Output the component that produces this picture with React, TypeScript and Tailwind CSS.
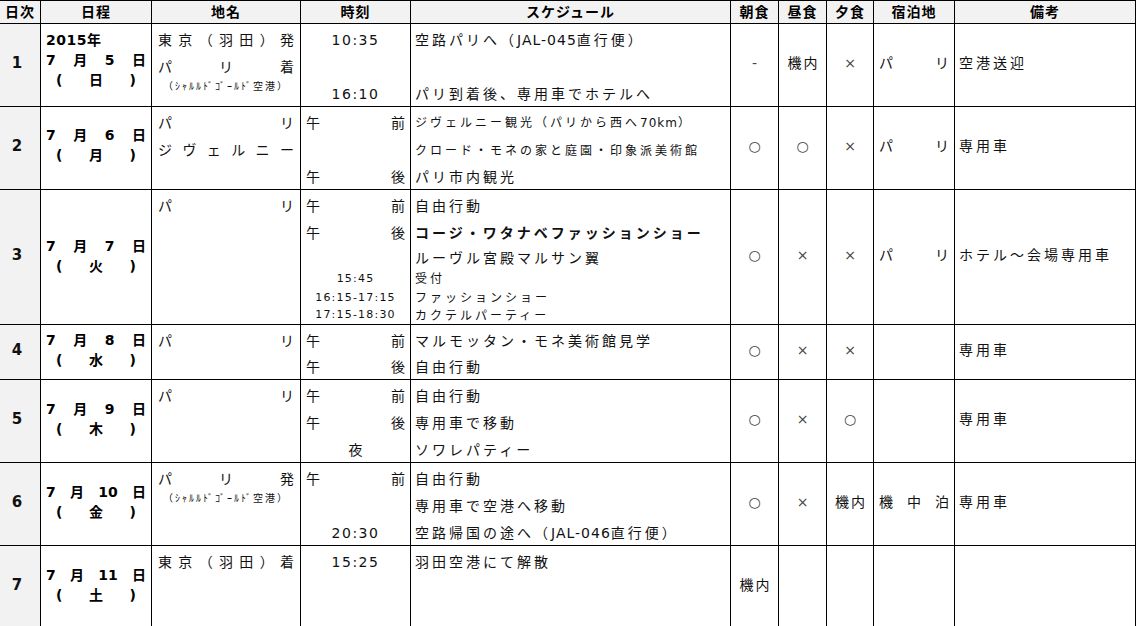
import React from "react";

// column template shared by header and every day row
const COLS =
  "grid grid-cols-[41px_111px_149px_110px_320px_48px_48px_47px_81px_181px]";
const FONT = "font-['DejaVu_Sans','Noto_Sans_CJK_JP',sans-serif]";

const T14 = "text-[14px] tracking-[3px]";
const T12 = "text-[12px] tracking-[3px]";
const TIME = "text-[14px] tracking-[1.5px]";
const TIME_S = "text-[11px] tracking-[1.2px]";

function Dist({ parts, className = "" }: { parts: string[]; className?: string }) {
  return (
    <div className={`flex w-full justify-between ${className}`}>
      {parts.map((p, i) => (
        <span key={i}>{p}</span>
      ))}
    </div>
  );
}

// latin runs inside japanese lines are set tighter, like the original sheet
function Mixed({ text }: { text: string }) {
  const parts = text.split(/([A-Za-z0-9\-]+)/);
  return (
    <>
      {parts.map((p, i) =>
        /^[A-Za-z0-9\-]+$/.test(p) ? (
          <span key={i} className="tracking-[1px]">
            {p}
          </span>
        ) : (
          <React.Fragment key={i}>{p}</React.Fragment>
        )
      )}
    </>
  );
}

const airport = (
  <div className="self-start w-full text-center text-[10px] tracking-[2px] leading-none pt-[1px]">
    （ｼｬﾙﾙﾄﾞｺﾞｰﾙﾄﾞ空港）
  </div>
);

const am = <Dist parts={["午", "前"]} className="px-[5px] text-[14px]" />;
const pm = <Dist parts={["午", "後"]} className="px-[5px] text-[14px]" />;
const paris = <Dist parts={["パ", "リ"]} className="px-[6px] text-[14px]" />;

const t = (s: string, cls = TIME) => <div className={`w-full text-center ${cls}`}>{s}</div>;
const s = (txt: string, cls = T14) => (
  <div className={`pl-[4px] ${cls}`}>
    <Mixed text={txt} />
  </div>
);

type Day = {
  no: string;
  h: string;
  datePb: string;
  year?: string;
  date: string[];
  dow: string;
  lines: string[];
  place: React.ReactNode[];
  time: React.ReactNode[];
  sched: React.ReactNode[];
  meals: string[];
  stay?: string[];
  note?: string;
};

const L3 = ["h-[28px]", "h-[27px]", "h-[27px]"];

const days: Day[] = [
  {
    no: "1",
    h: "h-[83px]",
    datePb: "pb-[10px]",
    year: "2015年",
    date: ["7", "月", "5", "日"],
    dow: "日",
    lines: L3,
    place: [
      <Dist parts={["東", "京", "（", "羽", "田", "）", "発"]} className="px-[6px] text-[14px]" />,
      <Dist parts={["パ", "リ", "着"]} className="px-[6px] text-[14px]" />,
      airport,
    ],
    time: [t("10:35"), null, t("16:10")],
    sched: [s("空路パリへ（JAL-045直行便）"), null, s("パリ到着後、専用車でホテルへ")],
    meals: ["-", "機内", "×"],
    stay: ["パ", "リ"],
    note: "空港送迎",
  },
  {
    no: "2",
    h: "h-[83px]",
    datePb: "pb-[6px]",
    date: ["7", "月", "6", "日"],
    dow: "月",
    lines: L3,
    place: [paris, <Dist parts={["ジ", "ヴ", "ェ", "ル", "ニ", "ー"]} className="px-[6px] text-[14px]" />, null],
    time: [am, null, pm],
    sched: [
      s("ジヴェルニー観光（パリから西へ70km）", T12),
      s("クロード・モネの家と庭園・印象派美術館", T12),
      s("パリ市内観光"),
    ],
    meals: ["○", "○", "×"],
    stay: ["パ", "リ"],
    note: "専用車",
  },
  {
    no: "3",
    h: "h-[135px]",
    datePb: "pb-[2px]",
    date: ["7", "月", "7", "日"],
    dow: "火",
    lines: ["h-[28px]", "h-[27px]", "h-[22px]", "h-[20px]", "h-[18px]", "h-[17px]"],
    place: [paris, null, null, null, null, null],
    time: [am, pm, null, t("15:45", TIME_S), t("16:15-17:15", TIME_S), t("17:15-18:30", TIME_S)],
    sched: [
      s("自由行動"),
      s("コージ・ワタナベファッションショー", `${T14} font-bold`),
      s("ルーヴル宮殿マルサン翼"),
      s("受付", T12),
      s("ファッションショー", T12),
      s("カクテルパーティー", T12),
    ],
    meals: ["○", "×", "×"],
    stay: ["パ", "リ"],
    note: "ホテル～会場専用車",
  },
  {
    no: "4",
    h: "h-[55px]",
    datePb: "pb-[4px]",
    date: ["7", "月", "8", "日"],
    dow: "水",
    lines: ["h-[28px]", "h-[24px]"],
    place: [paris, null],
    time: [am, pm],
    sched: [s("マルモッタン・モネ美術館見学"), s("自由行動")],
    meals: ["○", "×", "×"],
    note: "専用車",
  },
  {
    no: "5",
    h: "h-[83px]",
    datePb: "pb-[4px]",
    date: ["7", "月", "9", "日"],
    dow: "木",
    lines: L3,
    place: [paris, null, null],
    time: [am, pm, <div className="w-full text-center text-[14px]">夜</div>],
    sched: [s("自由行動"), s("専用車で移動"), s("ソワレパティー")],
    meals: ["○", "×", "○"],
    note: "専用車",
  },
  {
    no: "6",
    h: "h-[83px]",
    datePb: "pb-[4px]",
    date: ["7", "月", "10", "日"],
    dow: "金",
    lines: L3,
    place: [<Dist parts={["パ", "リ", "発"]} className="px-[6px] text-[14px]" />, airport, null],
    time: [am, null, t("20:30")],
    sched: [s("自由行動"), s("専用車で空港へ移動"), s("空路帰国の途へ（JAL-046直行便）")],
    meals: ["○", "×", "機内"],
    stay: ["機", "中", "泊"],
    note: "専用車",
  },
  {
    no: "7",
    h: "h-[83px]",
    datePb: "pb-[4px]",
    date: ["7", "月", "11", "日"],
    dow: "土",
    lines: L3,
    place: [<Dist parts={["東", "京", "（", "羽", "田", "）", "着"]} className="px-[6px] text-[14px]" />, null, null],
    time: [t("15:25"), null, null],
    sched: [s("羽田空港にて解散"), null, null],
    meals: ["機内", "", ""],
  },
];

const cell = "border-r border-b border-black";

function Lines({ lines, items }: { lines: string[]; items: React.ReactNode[] }) {
  return (
    <div className={`${cell} flex flex-col pt-[2px] overflow-hidden`}>
      {lines.map((h, i) => (
        <div key={i} className={`${h} flex items-center shrink-0`}>
          {items[i]}
        </div>
      ))}
    </div>
  );
}

function Meal({ v }: { v: string }) {
  const word = v.length > 1;
  return (
    <div className={`${cell} flex items-center justify-center pb-[3px]`}>
      <span
        className={
          word ? "text-[14px] tracking-[2px] pl-[2px] text-[#111]" : "text-[14px] text-[#444]"
        }
      >
        {v}
      </span>
    </div>
  );
}

function DayRow({ d }: { d: Day }) {
  return (
    <div className={`${COLS} ${d.h}`}>
      <div className={`${cell} bg-[#f2f2f2] flex items-center justify-center pr-[6px] pb-[3px] font-bold text-[15px]`}>
        {d.no}
      </div>
      <div className={`${cell} flex flex-col justify-center ${d.datePb} font-bold text-[14px] leading-[20px] text-black`}>
        {d.year && <div className="pl-[5px] tracking-[0.5px]">{d.year}</div>}
        <Dist parts={d.date} className="px-[5px]" />
        <Dist parts={["(", d.dow, ")"]} className="px-[15px]" />
      </div>
      <Lines lines={d.lines} items={d.place} />
      <Lines lines={d.lines} items={d.time} />
      <Lines lines={d.lines} items={d.sched} />
      {d.meals.map((m, i) => (
        <Meal key={i} v={m} />
      ))}
      <div className={`${cell} flex items-center pb-[3px] px-[5px] text-[14px]`}>
        {d.stay && <Dist parts={d.stay} />}
      </div>
      <div className={`${cell} flex items-center pb-[3px] pl-[4px] ${T14}`}>{d.note}</div>
    </div>
  );
}

const heads = ["日次", "日程", "地名", "時刻", "スケジュール", "朝食", "昼食", "夕食", "宿泊地", "備考"];

export default function App() {
  return (
    <div className={`w-[1136px] h-[626px] overflow-hidden bg-white text-[#111] ${FONT}`}>
      <div className={`${COLS} h-[24px] border-t border-black bg-[#f2f2f2]`}>
        {heads.map((h) => (
          <div key={h} className={`${cell} flex items-center justify-center font-bold text-[14px] tracking-[1px] text-black`}>
            {h}
          </div>
        ))}
      </div>
      {days.map((d) => (
        <DayRow key={d.no} d={d} />
      ))}
    </div>
  );
}
